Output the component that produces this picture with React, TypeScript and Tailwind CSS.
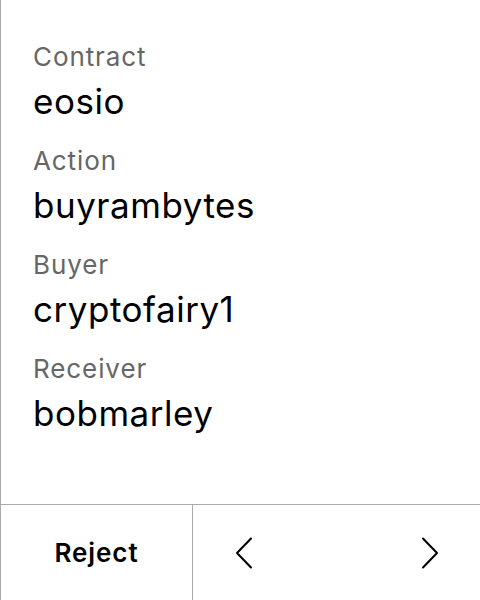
const fields = [
  { label: 'Contract', value: 'eosio' },
  { label: 'Action', value: 'buyrambytes' },
  { label: 'Buyer', value: 'cryptofairy1' },
  { label: 'Receiver', value: 'bobmarley' },
]

function Chevron({ dir }: { dir: 'left' | 'right' }) {
  return (
    <svg width="18" height="32" viewBox="0 0 18 32" fill="none" stroke="#000" strokeWidth="2" strokeLinecap="round" strokeLinejoin="round">
      {dir === 'left' ? <path d="M16 1.5 L2 16 L16 30.5" /> : <path d="M2 1.5 L16 16 L2 30.5" />}
    </svg>
  )
}

export default function App() {
  return (
    <div className="w-[480px] h-[600px] flex flex-col bg-white border-l border-[#aaaaaa] font-['Inter',sans-serif]">
      <div className="flex-1 flex flex-col pl-[32px] pt-[40px] gap-[16px]">
        {fields.map((f) => (
          <div key={f.label} className="flex flex-col">
            <div className="text-[26px] leading-[34px] tracking-[0.035em] text-[#666666]">{f.label}</div>
            <div className="text-[35px] leading-[54px] tracking-[0.015em] text-black">{f.value}</div>
          </div>
        ))}
      </div>
      <div className="h-[96px] flex border-t border-[#aaaaaa]">
        <button className="w-[192px] flex items-center justify-center text-[26px] font-semibold tracking-[0.035em] text-black border-r border-[#aaaaaa]">
          Reject
        </button>
        <div className="flex-1 flex items-center justify-between pl-[42px] pr-[41px]">
          <Chevron dir="left" />
          <Chevron dir="right" />
        </div>
      </div>
    </div>
  )
}
